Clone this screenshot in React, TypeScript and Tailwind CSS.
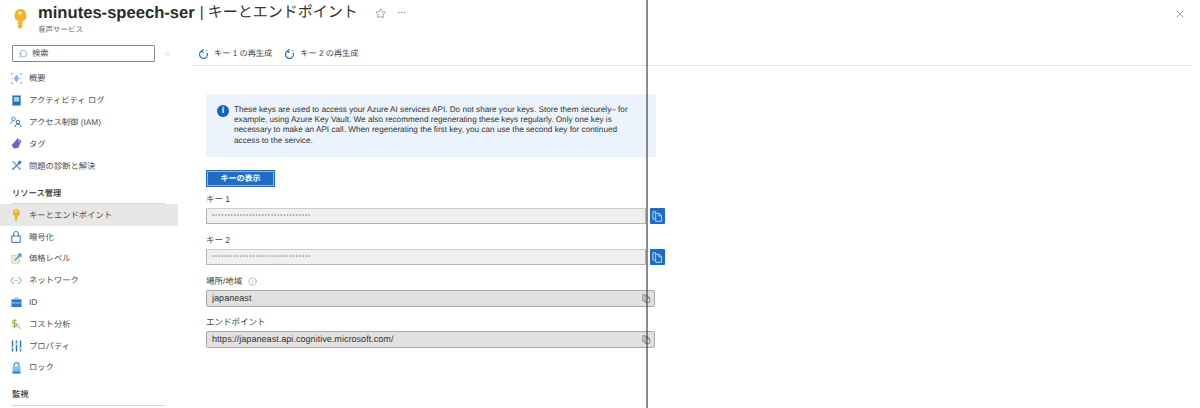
import { Star, MoreHorizontal, X, Search, ChevronsLeft, Info } from "lucide-react";

const font = { fontFamily: '"Liberation Sans", "Noto Sans CJK JP", sans-serif' };

function KeyIcon({ size }: { size: number }) {
  return (
    <svg width={size} height={size} viewBox="0 0 20 20">
      <path d="M10 0a6.500 6.500 0 0 1 2.400 12.500V18l-2.400 2-2.400-2v-1.200l1.200-1-1.200-1v-1l1.200-1-1.200-.8A6.500 6.500 0 0 1 10 0z" fill="#f5b32a" />
      <circle cx="10" cy="4" r="1.700" fill="#fff" opacity="0.8" />
    </svg>
  );
}

function RegenIcon() {
  return (
    <svg width="11" height="11" viewBox="0 0 12 12" fill="none" stroke="#1d6fc4" strokeWidth="1.300">
      <path d="M4 2.200A4.300 4.300 0 1 0 9.800 4" />
      <path d="M6.300 .4 3.800 2.200l2.200 1.900" />
      <circle cx="9" cy="1.800" r=".6" fill="#1d6fc4" stroke="none" />
    </svg>
  );
}

function CopyGlyph({ size, color }: { size: number; color: string }) {
  return (
    <svg width={size} height={size} viewBox="0 0 12 12" fill="none" stroke={color} strokeWidth="0.9">
      <path d="M4 2.500V.8H1v8h2.800" />
      <path d="M4 2.500h3.800l2.500 2.500v6.200H4z" />
      <path d="M7.500 2.500v2.800h2.800" />
    </svg>
  );
}

const icons: Record<string, React.ReactNode> = {
  overview: (
    <svg width="11" height="11" viewBox="0 0 12 12">
      <path d="M6 1.500 9 6 6 10.500 3 6z" fill="#83b9f9" />
      <path d="M.5 2.500v-2h2M9.500 .5h2v2M11.500 9.500v2h-2M2.500 11.500h-2v-2" fill="none" stroke="#5ea0ef" strokeWidth=".8" />
      <path d="M1 6h1M10 6h1" stroke="#5ea0ef" strokeWidth="1" />
    </svg>
  ),
  log: (
    <svg width="11" height="11" viewBox="0 0 12 12">
      <rect x="1.500" y=".5" width="9" height="11" fill="#2a6fb8" />
      <rect x="3.200" y="2.200" width="5.600" height="5" fill="#9fd0f5" />
    </svg>
  ),
  iam: (
    <svg width="12" height="12" viewBox="0 0 12 12" fill="none" stroke="#4a90d9" strokeWidth="1">
      <circle cx="3.500" cy="2.800" r="1.800" />
      <path d="M.8 8c.3-2 1.200-3 2.700-3" />
      <circle cx="8" cy="6" r="1.800" stroke="#2d6db5" />
      <path d="M5 11c.3-2 1.400-3 3-3s2.700 1 3 3" stroke="#2d6db5" />
    </svg>
  ),
  tag: (
    <svg width="11" height="11" viewBox="0 0 12 12">
      <path d="M7 .6 11.400 3 8 10.500 3 11.500.8 8z" fill="#7c5cc4" />
      <circle cx="8.800" cy="3.400" r=".9" fill="#d8ccf2" />
    </svg>
  ),
  fix: (
    <svg width="11" height="11" viewBox="0 0 12 12">
      <path d="M1 1.500 2.500 .8l8.700 9-1.400 1.400z" fill="#9aa7b3" />
      <path d="M11 1 9 .6 7 3l.5 1L.8 10l1.200 1.300L8 5l1.200.3 2-2z" fill="#2a7fd6" />
    </svg>
  ),
  lock: (
    <svg width="10" height="12" viewBox="0 0 10 12" fill="none" stroke="#2f78d0" strokeWidth="1">
      <path d="M2.500 5V3a2.500 2.500 0 0 1 5 0v2" />
      <rect x=".8" y="5" width="8.400" height="6.400" />
    </svg>
  ),
  price: (
    <svg width="11" height="11" viewBox="0 0 12 12">
      <rect x=".8" y="2.500" width="8.700" height="8.700" fill="#e4ecd2" stroke="#b5c796" strokeWidth=".6" />
      <path d="M4 8 10 2M7.500 1.200h3.300v3.300" fill="none" stroke="#2f86d8" strokeWidth="1.200" />
    </svg>
  ),
  network: (
    <svg width="12" height="9" viewBox="0 0 12 9" fill="none">
      <path d="M3.500 1 .8 4.500 3.500 8" stroke="#57a8ef" strokeWidth="1" />
      <path d="M8.500 1l2.700 3.500L8.500 8" stroke="#57a8ef" strokeWidth="1" />
      <path d="M4.200 4.500h.8M5.700 4.500h.8M7.200 4.500h.8" stroke="#7fba3c" strokeWidth="1" />
    </svg>
  ),
  id: (
    <svg width="11" height="11" viewBox="0 0 12 12">
      <path d="M4.300 2.500V1h3.400v1.500" fill="none" stroke="#6ba6e0" strokeWidth=".8" />
      <rect x=".5" y="2.500" width="11" height="8.500" fill="#2c7ccb" />
      <rect x=".5" y="6" width="11" height="1" fill="#a8d0f2" />
    </svg>
  ),
  cost: (
    <svg width="12" height="12" viewBox="0 0 12 12" fill="none">
      <path d="M6.500 2.500H3.800a1.400 1.400 0 0 0 0 2.800h1.400a1.400 1.400 0 0 1 0 2.800H2.500M4.500 1v9" stroke="#8cbc4e" strokeWidth="1.200" />
      <path d="M8 8l3 3" stroke="#a0a8ad" strokeWidth="1" />
      <circle cx="7.500" cy="7.500" r="1.500" stroke="#a0a8ad" strokeWidth=".7" />
    </svg>
  ),
  props: (
    <svg width="11" height="12" viewBox="0 0 11 12">
      <rect x=".8" y=".5" width="1.400" height="11" fill="#2a6fb8" />
      <rect x="4.800" y=".5" width="1.400" height="11" fill="#2a6fb8" />
      <rect x="8.800" y=".5" width="1.400" height="11" fill="#2a6fb8" />
      <rect x=".8" y="6" width="1.400" height="3" fill="#8fd0f5" />
      <rect x="4.800" y="2.500" width="1.400" height="3" fill="#8fd0f5" />
      <rect x="8.800" y="7" width="1.400" height="3" fill="#8fd0f5" />
    </svg>
  ),
  padlock: (
    <svg width="11" height="12" viewBox="0 0 11 12">
      <path d="M3 5V3.200a2.500 2.500 0 0 1 5 0V5" fill="none" stroke="#3c8fd8" strokeWidth="1.200" />
      <rect x="1.500" y="4.500" width="8" height="7" rx="1" fill="#7cc3ee" />
      <rect x="1.500" y="9.500" width="8" height="2" fill="#2f7fcb" />
    </svg>
  ),
};

function NavItem({ icon, label, active }: { icon: React.ReactNode; label: string; active?: boolean }) {
  return (
    <div className={`flex h-[21.8px] w-[178px] items-center text-[8.3px] text-[#4d4d4d] ${active ? "bg-[#e8e7e6]" : ""}`}>
      <div className="flex w-[29px] justify-center pl-[3px]">{icon}</div>
      <span>{label}</span>
    </div>
  );
}

function SectionHeading({ label, className }: { label: string; className: string }) {
  return (
    <div className={`ml-3 w-[153px] border-b border-[#d5d5d5] text-[8.3px] font-medium text-[#333] ${className}`}>
      {label}
    </div>
  );
}

function SecretField({ label }: { label: string }) {
  return (
    <div className="flex h-[41px] flex-col">
      <div className="flex h-[17px] items-center text-[8.5px] text-[#444]">{label}</div>
      <div className="flex items-center gap-1">
        <div className="flex h-4 w-[440px] items-center rounded-[1px] border border-[#b5b3b0] border-t-[#cfcdca] bg-[#f1f0ef] pl-[5px] text-[6px] leading-none tracking-[1px] text-[#888]">
          ••••••••••••••••••••••••••••••••
        </div>
        <div className="flex h-4 w-[15px] items-center justify-center rounded-[1px] bg-[#1a6cc8]">
          <CopyGlyph size={11} color="#dcebfb" />
        </div>
      </div>
    </div>
  );
}

function ReadOnlyField({ label, value, hint }: { label: string; value: string; hint?: boolean }) {
  return (
    <div className="flex h-[41px] flex-col">
      <div className="flex h-[17px] items-center gap-[6px] text-[8.5px] text-[#444]">
        {label}
        {hint && <Info size={9} strokeWidth={1} color="#555" />}
      </div>
      <div className="flex h-[17px] w-[449px] items-center justify-between rounded-[2px] border border-[#a9a9a9] bg-[#e1e1e1] pl-[5px] pr-[3px] text-[9.100px] text-[#333]">
        <span>{value}</span>
        <CopyGlyph size={9} color="#666" />
      </div>
    </div>
  );
}

export default function App() {
  return (
    <div className="relative flex h-[408px] w-[1200px] flex-col overflow-hidden bg-white [text-rendering:geometricPrecision]" style={font}>
      <header className="flex h-[40px] shrink-0 items-start">
        <div className="mt-[9px] w-[38px] pl-[10px]">
          <KeyIcon size={20} />
        </div>
        <div>
          <div className="flex h-[26px] items-center text-[15px] text-[#333]">
            <span className="text-[16.600px] font-bold text-[#2b2b2b]">minutes-speech-ser</span>
            <span className="ml-[5px]">| キーとエンドポイント</span>
            <Star size={11} strokeWidth={1} color="#333" className="ml-[17px] mt-[1px]" />
            <MoreHorizontal size={9} strokeWidth={1} color="#666" className="ml-[11px] mt-[-1px]" />
          </div>
          <div className="-mt-[1px] text-[7.500px] leading-[10px] text-[#666]">音声サービス</div>
        </div>
        <X size={12} strokeWidth={1} color="#444" className="ml-auto mr-[14px] mt-[8px]" />
      </header>

      <div className="flex min-h-0 flex-1">
        <aside className="w-[192px] shrink-0">
          <div className="flex h-[27px] items-start pl-3 pt-[5px]">
            <div className="flex h-[17px] w-[143px] items-center gap-[4px] rounded-[1px] border border-[#8a8a8a] pl-[5px] text-[8.300px] text-[#555]">
              <Search size={10} strokeWidth={1.200} color="#2f78d0" className="-scale-x-100" />
              検索
            </div>
            <ChevronsLeft size={9} strokeWidth={1} color="#999" className="ml-[8px] mt-[4px]" />
          </div>
          <div className="pt-[0.7px]">
            <NavItem icon={icons.overview} label="概要" />
            <NavItem icon={icons.log} label="アクティビティ ログ" />
            <NavItem icon={icons.iam} label="アクセス制御 (IAM)" />
            <NavItem icon={icons.tag} label="タグ" />
            <NavItem icon={icons.fix} label="問題の診断と解決" />
          </div>
          <SectionHeading label="リソース管理" className="mt-[10px] pb-[4px]" />
          <NavItem active icon={<KeyIcon size={12} />} label="キーとエンドポイント" />
          <NavItem icon={icons.lock} label="暗号化" />
          <NavItem icon={icons.price} label="価格レベル" />
          <NavItem icon={icons.network} label="ネットワーク" />
          <NavItem icon={icons.id} label="ID" />
          <NavItem icon={icons.cost} label="コスト分析" />
          <NavItem icon={icons.props} label="プロパティ" />
          <NavItem icon={icons.padlock} label="ロック" />
          <SectionHeading label="監視" className="mt-[10px] pb-[4px]" />
        </aside>

        <main className="flex-1 pr-2">
          <div className="flex h-[26px] items-center gap-[12px] border-b border-[#e0e0e0] pl-[6px] pt-[4px] text-[8.200px] text-[#444]">
            <div className="flex items-center gap-[5px]">
              <RegenIcon />
              キー 1 の再生成
            </div>
            <div className="flex items-center gap-[5px]">
              <RegenIcon />
              キー 2 の再生成
            </div>
          </div>
          <div className="pl-[14px] pt-[28px]">
            <div className="flex h-[63px] w-[450px] gap-[5px] bg-[#ebf3fc] px-[11px] pt-[10px]">
              <div className="mt-[0.5px] flex h-[12px] w-[12px] shrink-0 items-center justify-center rounded-full bg-[#1562c0] text-[9px] font-bold text-white">
                i
              </div>
              <p className="mt-[0.5px] w-[402px] text-[8.200px] leading-[10.400px] text-[#333]">
                These keys are used to access your Azure AI services API. Do not share your keys. Store them securely– for example, using Azure Key Vault. We also recommend regenerating these keys regularly. Only one key is necessary to make an API call. When regenerating the first key, you can use the second key for continued access to the service.
              </p>
            </div>
            <div className="mt-[13px] flex h-[17px] w-[69px] items-center justify-center border border-[#1a6cc8] bg-[#1e6dc6] text-[8px] font-bold text-white shadow-[inset_0_0_0_1px_#ffffff80]">
              キーの表示
            </div>
            <div className="mt-[4px]">
              <SecretField label="キー 1" />
              <SecretField label="キー 2" />
              <ReadOnlyField label="場所/地域" value="japaneast" hint />
              <ReadOnlyField label="エンドポイント" value="https://japaneast.api.cognitive.microsoft.com/" />
            </div>
          </div>
        </main>
      </div>

      <div className="absolute bottom-0 left-[646px] top-0 w-[2px] bg-[#3d3d3d]/60" />
    </div>
  );
}
